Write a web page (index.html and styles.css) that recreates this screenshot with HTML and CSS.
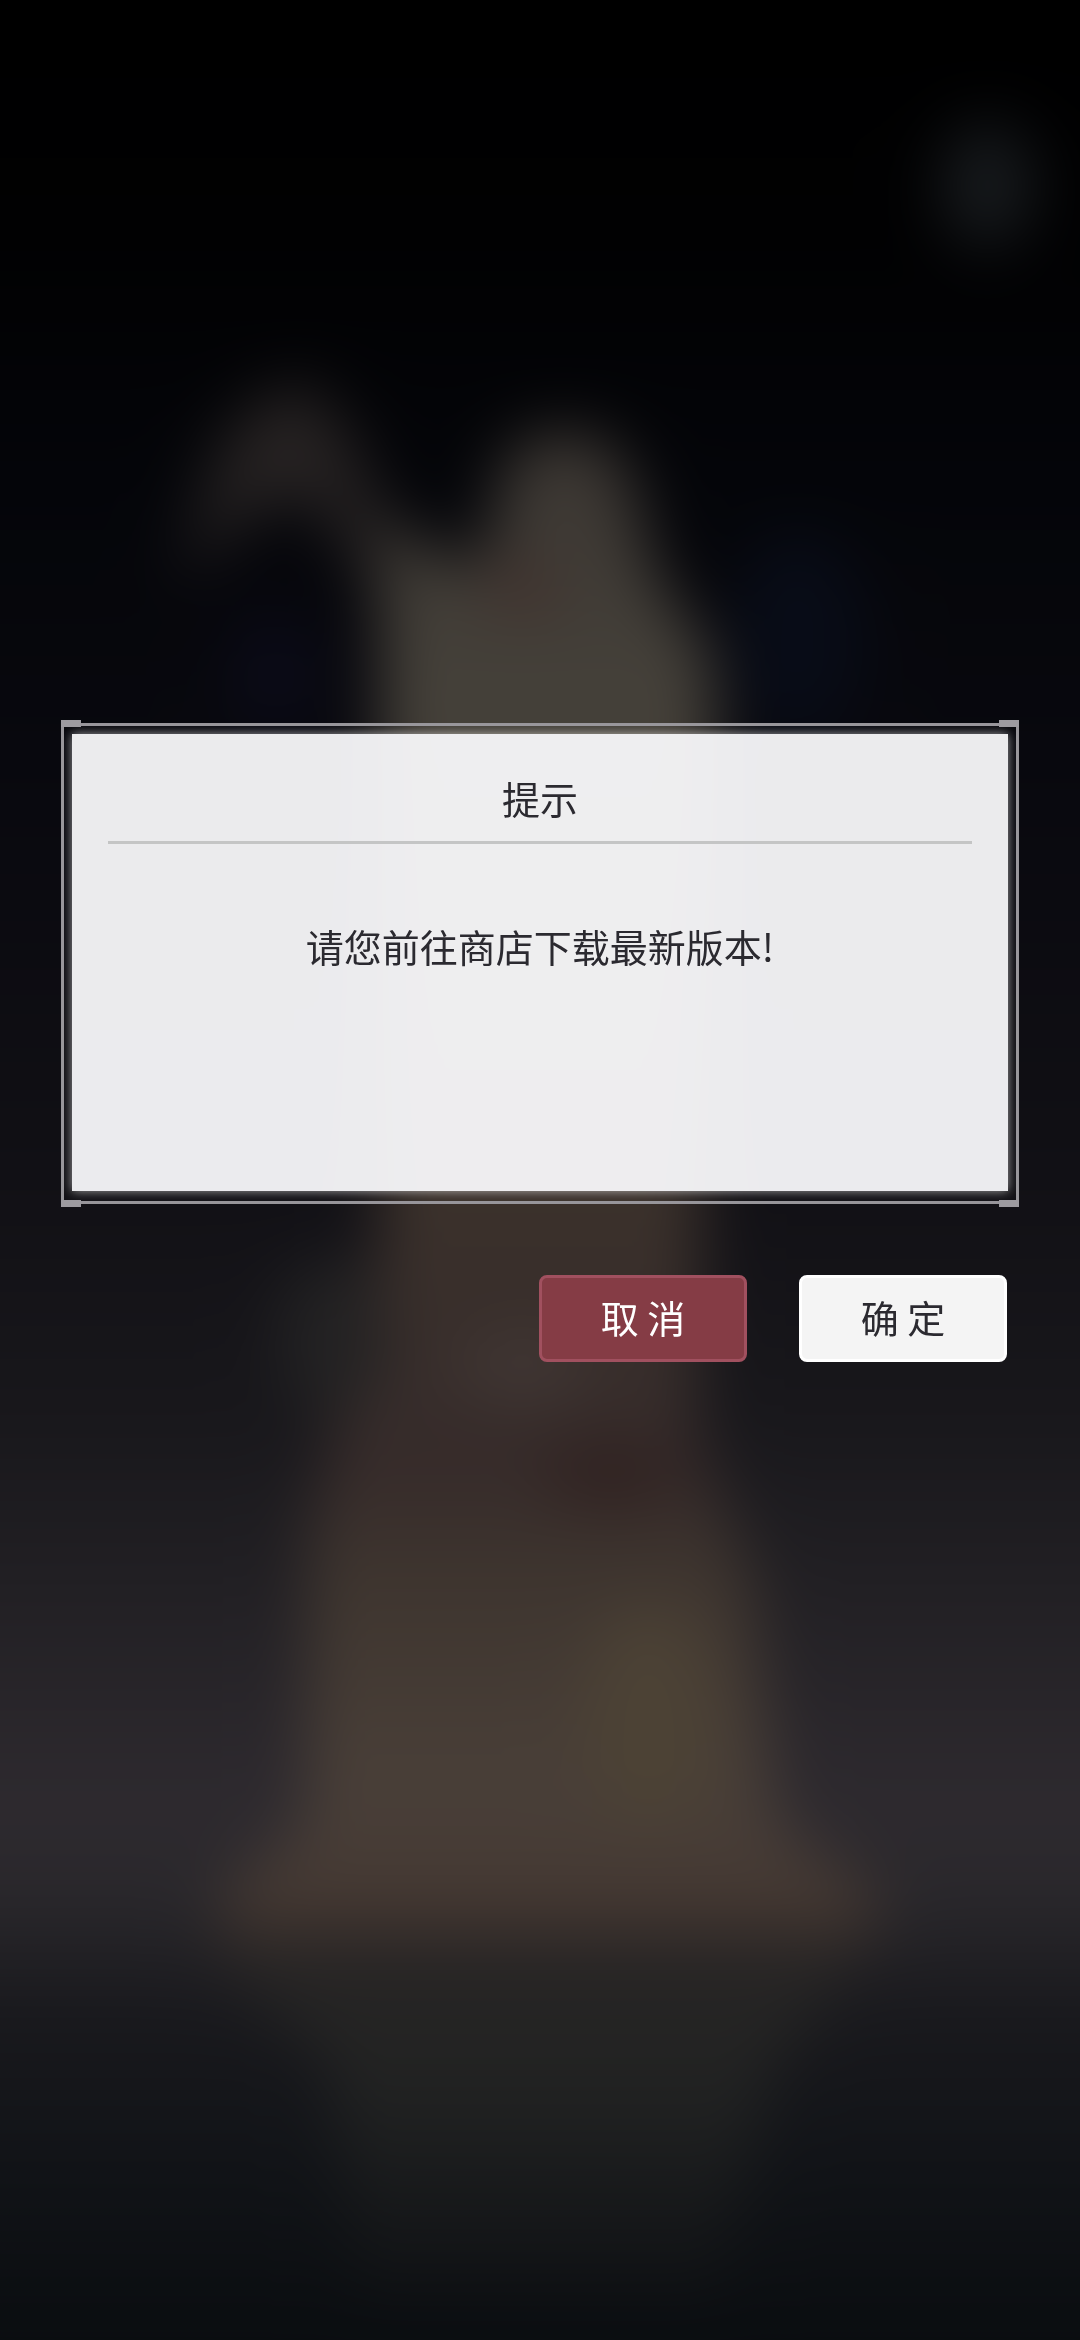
FILE: index.html
```html
<!DOCTYPE html>
<html lang="zh-CN">
<head>
    <meta charset="UTF-8">
    <meta name="viewport" content="width=device-width, initial-scale=1.0">
    <title>提示</title>
    <link rel="stylesheet" href="styles.css">
</head>
<body>
    <!-- blurred scene behind the dialog -->
    <svg class="scene" viewBox="0 0 724 1568" preserveAspectRatio="none" aria-hidden="true">
        <defs>
            <linearGradient id="base" gradientUnits="userSpaceOnUse" x1="0" y1="0" x2="0" y2="1568">
                <stop offset="0" stop-color="#000000"/>
                <stop offset="0.1" stop-color="#010102"/>
                <stop offset="0.2" stop-color="#040509"/>
                <stop offset="0.32" stop-color="#08080e"/>
                <stop offset="0.5" stop-color="#111015"/>
                <stop offset="0.6" stop-color="#18171b"/>
                <stop offset="0.68" stop-color="#222024"/>
                <stop offset="0.77" stop-color="#2e2a2f"/>
                <stop offset="0.81" stop-color="#2a282c"/>
                <stop offset="0.86" stop-color="#19191d"/>
                <stop offset="0.92" stop-color="#121418"/>
                <stop offset="1" stop-color="#0a0d10"/>
            </linearGradient>
            <linearGradient id="figure" gradientUnits="userSpaceOnUse" x1="0" y1="290" x2="0" y2="1310">
                <stop offset="0" stop-color="#3a3531"/>
                <stop offset="0.17" stop-color="#45413a"/>
                <stop offset="0.4" stop-color="#40382f"/>
                <stop offset="0.52" stop-color="#3a302b"/>
                <stop offset="0.63" stop-color="#372d2b"/>
                <stop offset="0.68" stop-color="#362b2a"/>
                <stop offset="0.75" stop-color="#3e352f"/>
                <stop offset="0.88" stop-color="#493f38"/>
                <stop offset="0.94" stop-color="#473c36"/>
                <stop offset="1" stop-color="#3c302a"/>
            </linearGradient>
            <linearGradient id="floor" gradientUnits="userSpaceOnUse" x1="0" y1="1310" x2="0" y2="1540">
                <stop offset="0" stop-color="#282625"/>
                <stop offset="0.4" stop-color="#212222"/>
                <stop offset="1" stop-color="#0f1114"/>
            </linearGradient>
            <filter id="soft" filterUnits="userSpaceOnUse" x="-100" y="-100" width="924" height="1768" color-interpolation-filters="sRGB">
                <feGaussianBlur stdDeviation="21"/>
            </filter>
        </defs>
        <g filter="url(#soft)">
            <rect x="-100" y="-100" width="924" height="1768" fill="url(#base)"/>
            <ellipse cx="662" cy="124" rx="32" ry="42" fill="#171a1d"/>
            <ellipse cx="535" cy="425" rx="45" ry="70" fill="#080c17"/>
            <ellipse cx="185" cy="450" rx="30" ry="40" fill="#0b0b18"/>
            <path d="M120 390L145 300L170 270L205 255L235 290L270 370L240 380L210 335L175 340Z" fill="#262222"/>
            <path d="M250 360L270 352L300 375L325 372L335 315L355 290L400 290L422 315L440 385L478 440L480 520L470 800L468 960L505 1060L520 1220L595 1275L580 1300L150 1300L145 1270L205 1220L207 1020L240 900L255 830L255 450Z" fill="url(#figure)"/>
            <ellipse cx="222" cy="895" rx="36" ry="52" fill="#232223"/>
            <ellipse cx="350" cy="395" rx="24" ry="16" fill="#412f2b"/>
            <ellipse cx="410" cy="988" rx="48" ry="22" fill="#302221"/>
            <ellipse cx="350" cy="915" rx="44" ry="22" fill="#413734"/>
            <ellipse cx="435" cy="1150" rx="44" ry="75" fill="#4c4235"/>
            <path d="M140 1312L580 1312L520 1380L480 1540L240 1540L220 1380Z" fill="url(#floor)"/>
        </g>
    </svg>

    <main class="dialog" role="dialog" aria-labelledby="title" aria-describedby="message">
        <div class="frame">
            <span class="corner top left"></span>
            <span class="corner top right"></span>
            <span class="corner bottom left"></span>
            <span class="corner bottom right"></span>
            <div class="panel">
                <h1 id="title">提示</h1>
                <p id="message">请您前往商店下载最新版本!</p>
            </div>
        </div>
        <div class="actions">
            <button type="button" class="btn cancel">取 消</button>
            <button type="button" class="btn confirm">确 定</button>
        </div>
    </main>
</body>
</html>
```

FILE: styles.css
```css
* {
    box-sizing: border-box;
}
body {
    margin: 0;
    min-height: 100vh;
    padding: 0 61px 255px;
    display: flex;
    flex-direction: column;
    justify-content: center;
    background-color: #050508;
    color: #2b2a30;
    font-family: "Noto Sans CJK SC", sans-serif;
    font-size: 38px;
    line-height: 56px;
}
.scene {
    position: fixed;
    top: 0;
    left: 0;
    width: 100%;
    height: 100%;
    z-index: -1;
}
.frame {
    position: relative;
    padding: 8px 8px 10px;
    border: 3px solid #97959a;
}
.corner {
    position: absolute;
    width: 20px;
    height: 7px;
    background-color: #9d9ba0;
}
.top {
    top: -6px;
}
.bottom {
    bottom: -6px;
}
.left {
    left: -3px;
}
.right {
    right: -3px;
}
.panel {
    min-height: 457px;
    padding: 0 36px;
    background-color: rgba(248, 248, 250, 0.95);
    box-shadow: 0 0 10px rgba(255, 255, 255, 0.6);
    text-align: center;
}
h1 {
    margin: 0;
    padding: 36px 0 15px;
    border-bottom: 3px solid #c4c5c5;
    font-size: 38px;
    font-weight: 400;
}
p {
    margin: 74px 0 0;
}
.actions {
    display: flex;
    justify-content: flex-end;
    gap: 52px;
    margin-top: 71px;
    padding-right: 12px;
}
.btn {
    width: 208px;
    height: 87px;
    padding: 0 0 4px;
    border: 3px solid #fff;
    border-radius: 8px;
    font: inherit;
    cursor: pointer;
}
.cancel {
    border-color: #a1505f;
    background-color: #853c45;
    color: #fff;
}
.confirm {
    background-color: #f4f4f4;
    color: #2b2a30;
}
```
